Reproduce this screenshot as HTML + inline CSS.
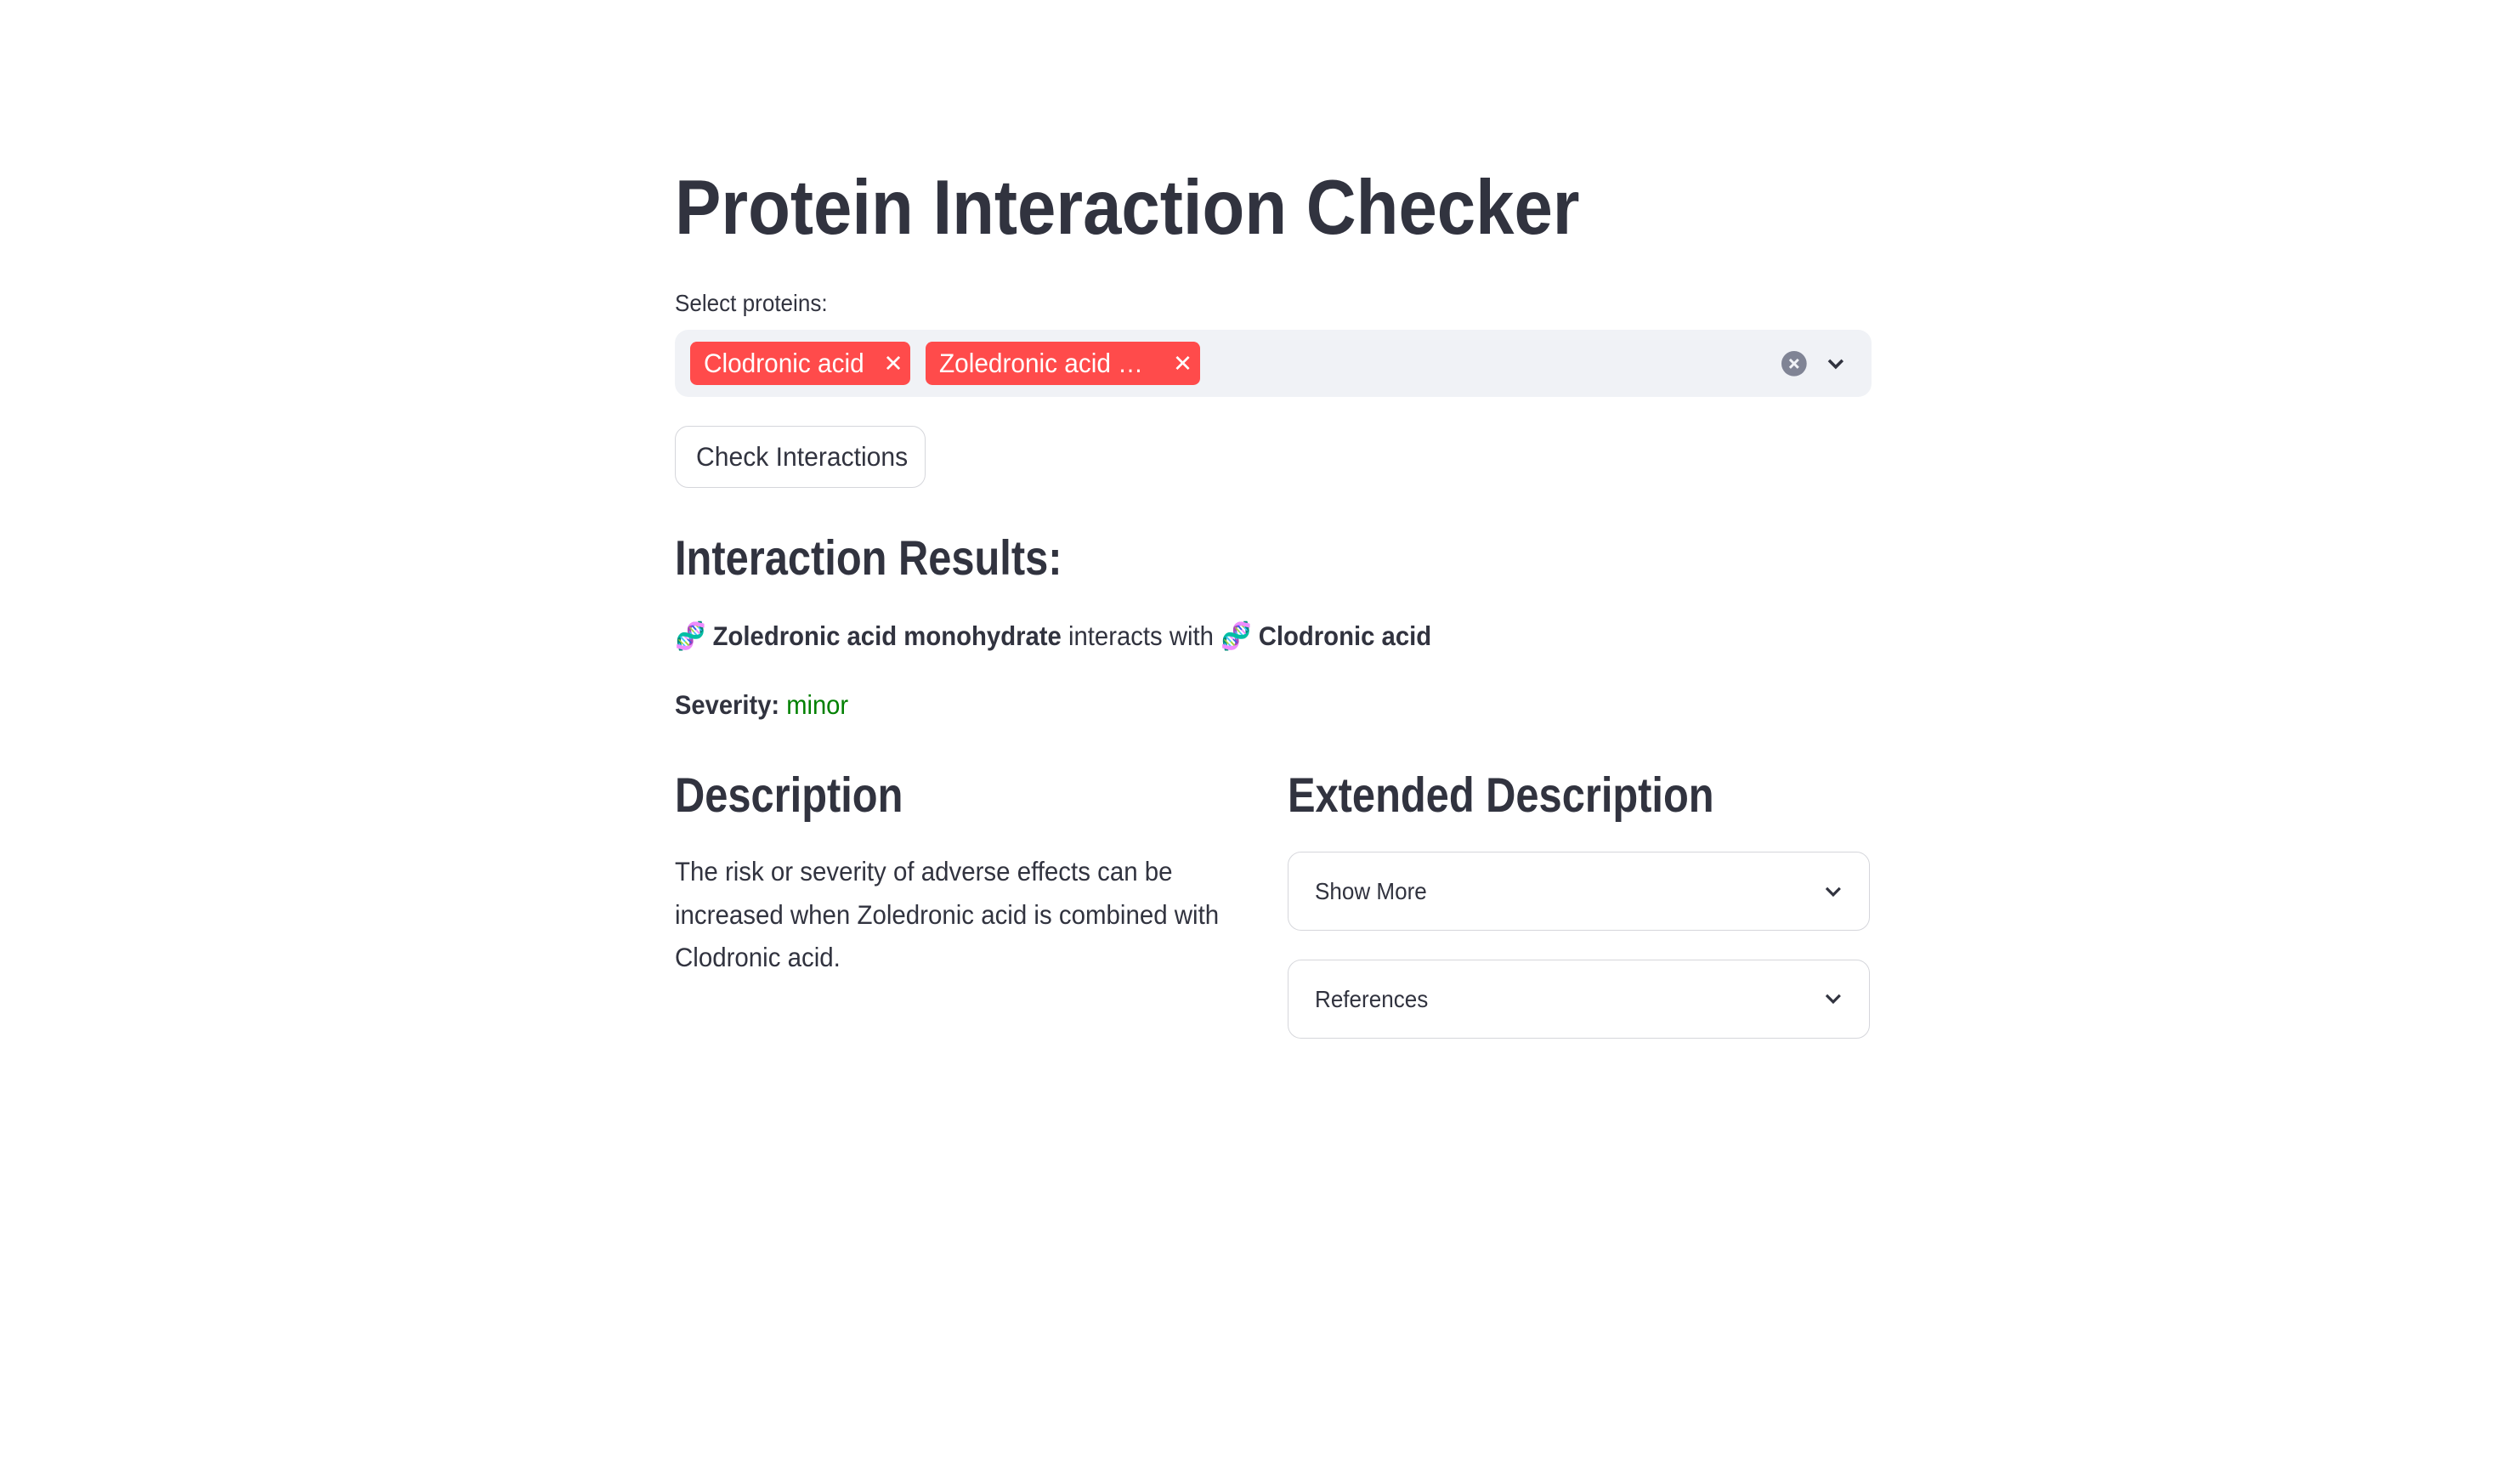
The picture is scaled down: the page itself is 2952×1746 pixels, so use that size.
<!DOCTYPE html>
<html><head><meta charset="utf-8">
<style>
html,body{margin:0;padding:0;background:#fff;}
body{width:2952px;height:1746px;overflow:hidden;}
#w{width:1491px;height:882px;position:relative;zoom:1.98;font-family:"Liberation Sans",sans-serif;color:#31333f;}
.a{position:absolute;white-space:nowrap;}
.n{display:inline-block;transform-origin:left center;transform:scaleX(.94);}
</style></head><body><div id="w">
<div class="a" style="left:401px;top:96px;font-size:46px;font-weight:700;line-height:56px;"><span class="n" style="transform:scaleX(.895)">Protein Interaction Checker</span></div>
<div class="a" style="left:401px;top:171px;font-size:14px;line-height:18px;"><span class="n">Select proteins:</span></div>
<div class="a" style="left:401px;top:196px;width:711px;height:40px;background:#f0f2f6;border-radius:8px;"></div>
<div class="a" style="left:410px;top:203px;width:131px;height:26px;background:#ff4b4b;border-radius:4px;color:#fff;font-size:16px;line-height:26px;"><span class="n" style="margin-left:8px">Clodronic acid</span><span style="position:absolute;left:115px;top:0;font-size:14px">✕</span></div>
<div class="a" style="left:550px;top:203px;width:163px;height:26px;background:#ff4b4b;border-radius:4px;color:#fff;font-size:16px;line-height:26px;"><span class="n" style="margin-left:8px">Zoledronic acid …</span><span style="position:absolute;left:147px;top:0;font-size:14px">✕</span></div>
<svg class="a" style="left:1058px;top:208px" width="16" height="16" viewBox="0 0 16 16"><circle cx="8" cy="8" r="7.5" fill="#808495"/><path d="M5.5 5.5l5 5M10.5 5.5l-5 5" stroke="#f0f2f6" stroke-width="1.5"/></svg>
<svg class="a" style="left:1084px;top:209px" width="14" height="14" viewBox="0 0 14 14"><path d="M3 5l4 4 4-4" stroke="#31333f" stroke-width="1.8" fill="none"/></svg>
<div class="a" style="left:401px;top:253px;width:148px;height:36px;border:1px solid #d5d6db;border-radius:8px;font-size:16px;line-height:36px;"><span class="n" style="margin-left:12px;transform:scaleX(.95)">Check Interactions</span></div>
<div class="a" style="left:401px;top:314px;font-size:29px;font-weight:700;line-height:36px;"><span class="n" style="transform:scaleX(.85)">Interaction Results:</span></div>
<div class="a" style="left:401px;top:366px;font-size:16px;line-height:24px;"><span class="n" style="transform:scaleX(.925)">🧬 <b>Zoledronic acid monohydrate</b> interacts with 🧬 <b>Clodronic acid</b></span></div>
<div class="a" style="left:401px;top:407px;font-size:16px;line-height:24px;"><span class="n" style="transform:scaleX(.92)"><b>Severity:</b> <span style="color:#008000">minor</span></span></div>
<div class="a" style="left:401px;top:455px;font-size:29px;font-weight:700;line-height:36px;"><span class="n" style="transform:scaleX(.85)">Description</span></div>
<div class="a" style="left:765px;top:455px;font-size:29px;font-weight:700;line-height:36px;"><span class="n" style="transform:scaleX(.85)">Extended Description</span></div>
<div class="a" style="left:401px;top:505px;font-size:16px;line-height:25.6px;"><span class="n" style="transform:scaleX(.93)">The risk or severity of adverse effects can be<br>increased when Zoledronic acid is combined with<br>Clodronic acid.</span></div>
<div class="a" style="left:765px;top:506px;width:345px;height:46px;border:1px solid #d5d6db;border-radius:8px;font-size:14px;line-height:46px;"><span class="n" style="margin-left:16px">Show More</span><svg style="position:absolute;left:318px;top:17px" width="12" height="12" viewBox="0 0 12 12"><path d="M2 4l4 4 4-4" stroke="#31333f" stroke-width="1.6" fill="none"/></svg></div>
<div class="a" style="left:765px;top:570px;width:345px;height:46px;border:1px solid #d5d6db;border-radius:8px;font-size:14px;line-height:46px;"><span class="n" style="margin-left:16px">References</span><svg style="position:absolute;left:318px;top:17px" width="12" height="12" viewBox="0 0 12 12"><path d="M2 4l4 4 4-4" stroke="#31333f" stroke-width="1.6" fill="none"/></svg></div>
</div></body></html>
